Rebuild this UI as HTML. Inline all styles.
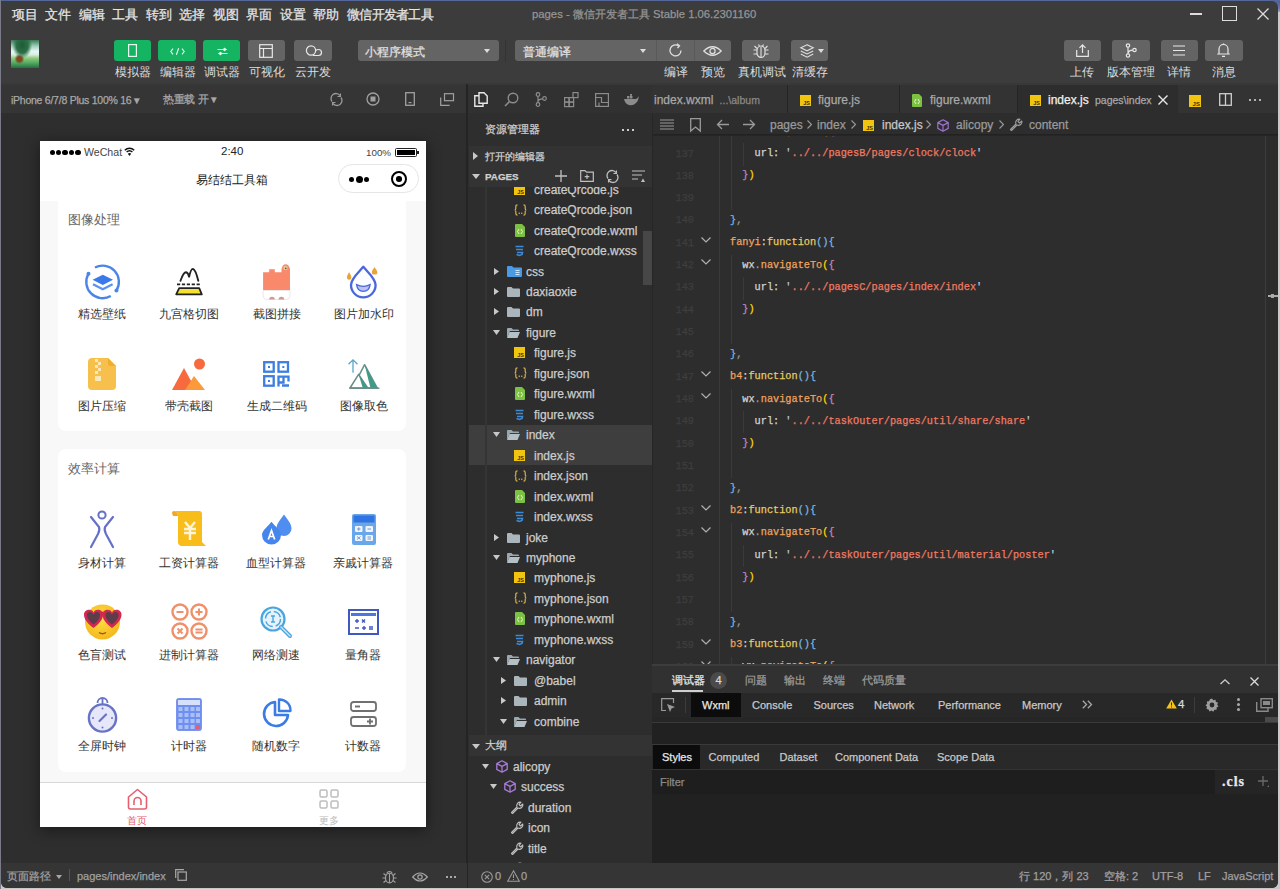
<!DOCTYPE html>
<html><head><meta charset="utf-8">
<style>
*{box-sizing:border-box;margin:0;padding:0}
html,body{width:1280px;height:889px;overflow:hidden;background:#c9c9c9;font-family:"Liberation Sans",sans-serif}
.a{position:absolute}
.t{position:absolute;white-space:nowrap;line-height:1;-webkit-text-stroke:0.25px currentColor}
#win{position:absolute;left:1px;top:0;width:1277px;height:888px;background:#3c3c3c;border-radius:0 6px 6px 6px;overflow:hidden}
.menu{top:8px;font-size:13px;color:#e6e6e6}
.btn{position:absolute;top:40px;height:21px;border-radius:3px;background:#646464}
.btn.g{background:#15b463}
.lbl{position:absolute;top:66px;font-size:12px;color:#dcdcdc;white-space:nowrap;line-height:1}
svg{position:absolute;overflow:visible}
.lb{font-size:12px;color:#333;-webkit-text-stroke:0}
.ph{-webkit-text-stroke:0 !important}
.ft{font-size:12px;color:#cccccc}
.dt{font-size:11px}
.sb{font-size:11px;color:#a0a0a0}
.tb{font-size:12px;color:#a8a8a8}
.bc{font-size:12px;color:#9a9a9a}
.ln{font-size:10.25px;font-family:"Liberation Mono",monospace;color:#3e3e3e;text-align:right}
.code{font-size:10.25px;font-family:"Liberation Mono",monospace;white-space:pre}
</style></head><body>
<div id="win"></div>
<div class="a" style="left:1272px;top:0;width:8px;height:12px;background:linear-gradient(200deg,#3f5aa8,#6a78a8 60%,#c9c9c9)"></div><div class="a" style="left:1271px;top:1px;width:7px;height:12px;background:#3c3c3c;border-radius:0 6px 0 0"></div><div class="a" style="left:0;top:0;width:1280px;height:1px;background:#55669a"></div>
<div class="a" style="left:0;top:0;width:1px;height:889px;background:#7a7a88"></div>
<!-- menu -->
<div class="t menu" style="left:12px">项目</div>
<div class="t menu" style="left:45px">文件</div>
<div class="t menu" style="left:79px">编辑</div>
<div class="t menu" style="left:112px">工具</div>
<div class="t menu" style="left:146px">转到</div>
<div class="t menu" style="left:179px">选择</div>
<div class="t menu" style="left:213px">视图</div>
<div class="t menu" style="left:246px">界面</div>
<div class="t menu" style="left:280px">设置</div>
<div class="t menu" style="left:313px">帮助</div>
<div class="t menu" style="left:347px;letter-spacing:-0.75px">微信开发者工具</div>
<div class="t" style="left:532px;top:8.5px;font-size:11.3px;color:#959595">pages - 微信开发者工具 Stable 1.06.2301160</div>
<div class="a" style="left:1190px;top:13px;width:12px;height:1.5px;background:#ddd"></div>
<div class="a" style="left:1222px;top:6px;width:15px;height:15px;border:1.5px solid #ddd"></div>
<svg style="left:1257px;top:8px" width="12" height="12"><path d="M0.5 0.5L11.5 11.5M11.5 0.5L0.5 11.5" stroke="#ddd" stroke-width="1.3"/></svg>
<!-- avatar -->
<div class="a" style="left:11px;top:40px;width:28px;height:28px;background:radial-gradient(circle at 30% 68%,#7a4a22 0,#7a4a22 2.5px,transparent 5px),radial-gradient(ellipse at 40% 18%,#1f5a35 0,#2d7048 6px,transparent 10px),linear-gradient(180deg,#3d7a55 0%,#9fd0bc 22%,#e6f6f8 40%,#d8f0e0 52%,#8cc878 66%,#52a862 82%,#23703f 100%)"></div>
<!-- toolbar buttons -->
<div class="btn g" style="left:114px;width:37px"></div>
<div class="btn g" style="left:158px;width:38px"></div>
<div class="btn g" style="left:203px;width:37px"></div>
<div class="btn" style="left:248px;width:37px"></div>
<div class="btn" style="left:294px;width:38px"></div>
<div class="lbl" style="left:115px">模拟器</div>
<div class="lbl" style="left:160px">编辑器</div>
<div class="lbl" style="left:204px">调试器</div>
<div class="lbl" style="left:249px">可视化</div>
<div class="lbl" style="left:295px">云开发</div>
<div class="btn" style="left:358px;width:141px"></div>
<div class="t" style="left:365px;top:46.5px;font-size:11.5px;color:#e0e0e0">小程序模式</div>
<svg style="left:484px;top:49px" width="6" height="4"><path d="M0 0H6L3 4Z" fill="#ddd"/></svg>
<div class="a" style="left:505px;top:40px;width:1px;height:22px;background:#333"></div>
<div class="btn" style="left:515px;width:216px"></div>
<div class="a" style="left:656px;top:40px;width:1px;height:21px;background:#5a5a5a"></div>
<div class="a" style="left:694px;top:40px;width:1px;height:21px;background:#5a5a5a"></div>
<div class="t" style="left:523px;top:46.5px;font-size:11.5px;color:#e0e0e0">普通编译</div>
<svg style="left:640px;top:49px" width="6" height="4"><path d="M0 0H6L3 4Z" fill="#ddd"/></svg>
<div class="btn" style="left:742px;width:38px"></div>
<div class="btn" style="left:791px;width:37px"></div>
<div class="lbl" style="left:664px">编译</div>
<div class="lbl" style="left:701px">预览</div>
<div class="lbl" style="left:738px">真机调试</div>
<div class="lbl" style="left:792px">清缓存</div>
<div class="btn" style="left:1064px;width:37px"></div>
<div class="btn" style="left:1112px;width:38px"></div>
<div class="btn" style="left:1161px;width:37px"></div>
<div class="btn" style="left:1205px;width:38px"></div>
<div class="lbl" style="left:1070px">上传</div>
<div class="lbl" style="left:1107px">版本管理</div>
<div class="lbl" style="left:1167px">详情</div>
<div class="lbl" style="left:1212px">消息</div>
<!-- toolbar icons -->
<svg style="left:128px;top:44px" width="9" height="13" viewBox="0 0 9 13"><rect x="0.6" y="0.6" width="7.8" height="11.8" fill="none" stroke="#e6fff0" stroke-width="1.2"/></svg>
<svg style="left:170px;top:47.5px" width="15" height="7" viewBox="0 0 15 7"><path d="M3 0.6L0.8 3.5L3 6.4M12 0.6L14.2 3.5L12 6.4M8.6 0.3L6.4 6.7" fill="none" stroke="#e6fff0" stroke-width="1.1"/></svg>
<svg style="left:217px;top:48px" width="11" height="7" viewBox="0 0 11 7"><path d="M0.5 1.5H7M7 0V3L9.5 1.5ZM10.5 5.5H4M4 4V7L1.5 5.5Z" fill="#e6fff0" stroke="#e6fff0" stroke-width="0.9"/></svg>
<svg style="left:259px;top:44px" width="14" height="14" viewBox="0 0 14 14"><rect x="0.7" y="0.7" width="12.6" height="12.6" fill="none" stroke="#e8e8e8" stroke-width="1.2"/><path d="M0.7 4.5H13.3M4.5 4.5V13.3" stroke="#e8e8e8" stroke-width="1.2"/></svg>
<svg style="left:305px;top:45px" width="17" height="12" viewBox="0 0 17 12"><circle cx="6" cy="5.5" r="4.6" fill="none" stroke="#e8e8e8" stroke-width="1.2"/><path d="M8 10.5H13.5A3 3 0 0 0 13.5 4.5Q12 4.5 10.5 5.5" fill="none" stroke="#e8e8e8" stroke-width="1.2"/></svg>
<svg style="left:668px;top:43px" width="15" height="15" viewBox="0 0 15 15"><path d="M13 7.5A5.5 5.5 0 1 1 10.5 2.8" fill="none" stroke="#e0e0e0" stroke-width="1.3"/><path d="M9 0.8L11.5 2.8L9.5 5" fill="none" stroke="#e0e0e0" stroke-width="1.3"/></svg>
<svg style="left:703px;top:46px" width="19" height="10" viewBox="0 0 19 10"><path d="M0.8 5Q9.5 -3.5 18.2 5Q9.5 13.5 0.8 5Z" fill="none" stroke="#e0e0e0" stroke-width="1.2"/><circle cx="9.5" cy="5" r="2.6" fill="none" stroke="#e0e0e0" stroke-width="1.2"/></svg>
<svg style="left:753px;top:43px" width="16" height="15" viewBox="0 0 16 15"><path d="M8 3A4 4.5 0 0 1 12 7.5V10A4 4.5 0 0 1 4 10V7.5A4 4.5 0 0 1 8 3Z" fill="none" stroke="#e0e0e0" stroke-width="1.2"/><path d="M5.5 1.5L6.5 3.3M10.5 1.5L9.5 3.3M8 4V14M0.5 7H4M12 7H15.5M0.5 11H4M12 11H15.5M1.5 3L4 5.5M14.5 3L12 5.5" stroke="#e0e0e0" stroke-width="1.1"/></svg>
<svg style="left:800px;top:44px" width="14" height="14" viewBox="0 0 14 14"><path d="M7 0.8L13.2 3.8L7 6.8L0.8 3.8Z" fill="none" stroke="#e0e0e0" stroke-width="1.1"/><path d="M0.8 7L7 10L13.2 7M0.8 10L7 13.2L13.2 10" fill="none" stroke="#e0e0e0" stroke-width="1.1"/></svg>
<svg style="left:818px;top:49px" width="6" height="4"><path d="M0 0H6L3 4Z" fill="#ddd"/></svg>
<svg style="left:1076px;top:44px" width="13" height="13" viewBox="0 0 13 13"><path d="M0.7 6V12.3H12.3V6" fill="none" stroke="#e8e8e8" stroke-width="1.2"/><path d="M6.5 9V1M3.5 3.8L6.5 0.8L9.5 3.8" fill="none" stroke="#e8e8e8" stroke-width="1.2"/></svg>
<svg style="left:1125px;top:43px" width="12" height="15" viewBox="0 0 12 15"><circle cx="3" cy="2.5" r="1.7" fill="none" stroke="#e8e8e8" stroke-width="1.2"/><circle cx="3" cy="12.5" r="1.7" fill="none" stroke="#e8e8e8" stroke-width="1.2"/><circle cx="9.5" cy="7" r="1.7" fill="none" stroke="#e8e8e8" stroke-width="1.2"/><path d="M3 4.2V10.8M3 10.5Q3.5 7.5 7.8 7.2" fill="none" stroke="#e8e8e8" stroke-width="1.2"/></svg>
<svg style="left:1173px;top:45px" width="12" height="11" viewBox="0 0 12 11"><path d="M0 1H12M0 5.5H12M0 10H12" stroke="#e8e8e8" stroke-width="1.2"/></svg>
<svg style="left:1217px;top:43px" width="13" height="15" viewBox="0 0 13 15"><path d="M2 11V6A4.5 4.5 0 0 1 11 6V11H12.3H0.7Z" fill="none" stroke="#e8e8e8" stroke-width="1.2" stroke-linejoin="round"/><path d="M6.5 0.5V1.5M5 13.3H8" stroke="#e8e8e8" stroke-width="1.3"/></svg>
<!-- toolbar bottom -->
<div class="a" style="left:1px;top:83px;width:1277px;height:2px;background:#383838"></div>
<!-- simulator panel -->
<div class="a" style="left:1px;top:85px;width:465px;height:28px;background:#353535"></div>
<div class="a" style="left:1px;top:113px;width:465px;height:750px;background:#2e2e2e"></div>
<div class="a" style="left:466px;top:84px;width:2px;height:779px;background:#242424"></div>
<div class="t" style="left:11px;top:94.5px;font-size:10.5px;letter-spacing:-0.25px;color:#a8a8a8">iPhone 6/7/8 Plus 100% 16 ▾</div>
<div class="t" style="left:163px;top:94px;font-size:11px;letter-spacing:-0.3px;color:#a8a8a8">热重载 开 ▾</div>
<svg style="left:330px;top:93px" width="13" height="13" viewBox="0 0 13 13"><path d="M2 8.5A5 5 0 0 1 10 2.5M11 4.5A5 5 0 0 1 3 10.5" fill="none" stroke="#9a9a9a" stroke-width="1.3"/><path d="M10.5 0.5v3h-3M2.5 12.5v-3h3" fill="none" stroke="#9a9a9a" stroke-width="1.1"/></svg>
<svg style="left:366px;top:92px" width="14" height="14"><circle cx="7" cy="7" r="6" fill="none" stroke="#a0a0a0" stroke-width="1.3"/><rect x="4.5" y="4.5" width="5" height="5" fill="#a0a0a0"/></svg>
<svg style="left:405px;top:92px" width="10" height="14"><rect x="0.7" y="0.7" width="8.6" height="12.6" fill="none" stroke="#a0a0a0" stroke-width="1.3"/><rect x="3.5" y="10" width="3" height="1.2" fill="#a0a0a0"/></svg>
<svg style="left:440px;top:93px" width="14" height="13"><rect x="4.5" y="0.7" width="9" height="7" fill="none" stroke="#a0a0a0" stroke-width="1.2"/><path d="M0.7 4.5v7.8h9" fill="none" stroke="#a0a0a0" stroke-width="1.2"/></svg>
<!-- phone -->
<div class="a" style="left:40px;top:141px;width:386px;height:686px;background:#fff;box-shadow:0 3px 14px rgba(0,0,0,.45)"></div>
<div class="a" style="left:40px;top:201px;width:386px;height:581px;background:#f8f8f8"></div>
<div class="a" style="left:58px;top:201px;width:348px;height:230px;background:#fff;border-radius:0 0 8px 8px"></div>
<div class="a" style="left:58px;top:449px;width:348px;height:323px;background:#fff;border-radius:8px"></div>
<div class="a" style="left:40px;top:782px;width:386px;height:45px;background:#fff;border-top:1px solid #d8d8d8"></div>
<div class="a" style="left:49.5px;top:149.5px;width:5.5px;height:5.5px;border-radius:50%;background:#000"></div><div class="a" style="left:55.9px;top:149.5px;width:5.5px;height:5.5px;border-radius:50%;background:#000"></div><div class="a" style="left:62.3px;top:149.5px;width:5.5px;height:5.5px;border-radius:50%;background:#000"></div><div class="a" style="left:68.7px;top:149.5px;width:5.5px;height:5.5px;border-radius:50%;background:#000"></div><div class="a" style="left:75.1px;top:149.5px;width:5.5px;height:5.5px;border-radius:50%;background:#000"></div>
<div class="t ph" style="left:84px;top:146.5px;font-size:10.6px;color:#444">WeChat</div>
<svg style="left:123.5px;top:147px" width="11" height="9" viewBox="0 0 11 9"><path d="M0.8 3.2A6.8 6.8 0 0 1 10.2 3.2" fill="none" stroke="#111" stroke-width="1.5"/><path d="M2.6 5A4.3 4.3 0 0 1 8.4 5" fill="none" stroke="#111" stroke-width="1.5"/><path d="M5.5 9L3.8 6.8A2.4 2.4 0 0 1 7.2 6.8Z" fill="#111"/></svg>
<div class="t ph" style="left:221px;top:146px;font-size:11.5px;color:#222">2:40</div>
<div class="t ph" style="left:366px;top:147.5px;font-size:9.8px;color:#444">100%</div>
<div class="a" style="left:395px;top:148px;width:22px;height:9px;border:1px solid #222;border-radius:1.5px;padding:1px"><div style="width:100%;height:100%;background:#000"></div></div>
<div class="a" style="left:417px;top:151px;width:2px;height:3px;background:#222"></div>
<div class="t ph" style="left:196px;top:174.5px;font-size:11.9px;color:#222">易结结工具箱</div>
<div class="a" style="left:338px;top:164px;width:81px;height:29px;border:1px solid #e5e5e5;border-radius:15px;background:rgba(255,255,255,.6)"></div>
<div class="a" style="left:349px;top:177px;width:5px;height:5px;border-radius:50%;background:#000"></div>
<div class="a" style="left:355.5px;top:175.5px;width:7px;height:7px;border-radius:50%;background:#000"></div>
<div class="a" style="left:364px;top:177px;width:5px;height:5px;border-radius:50%;background:#000"></div>
<div class="a" style="left:391px;top:171px;width:16px;height:16px;border-radius:50%;border:2px solid #000"></div>
<div class="a" style="left:396px;top:176px;width:5.5px;height:5.5px;border-radius:50%;background:#000"></div>
<div class="t ph" style="left:68px;top:214px;font-size:12.5px;color:#666">图像处理</div>
<div class="t ph" style="left:68px;top:463px;font-size:12.5px;color:#666">效率计算</div>
<!-- icon grid card 1 -->
<svg style="left:84px;top:264px" width="36" height="36" viewBox="0 0 36 36"><path d="M10.95 3.51A16.3 16.3 0 0 1 32.42 26.54" fill="none" stroke="#4a86e8" stroke-width="2.4"/><path d="M26.75 32.02A16.3 16.3 0 0 1 4.48 9.75" fill="none" stroke="#4a86e8" stroke-width="2.4"/><circle cx="32.42" cy="26.54" r="2" fill="#4a86e8"/><circle cx="4.48" cy="9.75" r="2" fill="#4a86e8"/><path d="M18.8 10.7L29 15.8L18.8 20.9L8.6 15.8Z" fill="#3a7ae8"/><path d="M9 20.2L18.8 25.2L28.6 20.2" fill="none" stroke="#5b93ee" stroke-width="2.4"/></svg>
<svg style="left:175px;top:268px" width="28" height="28" viewBox="0 0 28 28"><path d="M5.5 12.8Q8.5 4 11.1 4.2Q13 4.5 14.1 8.7Q16 0.6 17.9 0.9Q20.5 1.5 23.3 12.8" fill="none" stroke="#222" stroke-width="1.9" stroke-linejoin="round" stroke-linecap="round"/><path d="M2 16.4H26.3" stroke="#222" stroke-width="1.9" stroke-dasharray="3.2 1.7"/><path d="M4.2 20.2H24.2L26.8 26.3H1.2Z" fill="#f4e134" stroke="#222" stroke-width="1.8" stroke-linejoin="round"/></svg>
<svg style="left:262px;top:264px" width="29" height="36" viewBox="0 0 29 36"><path d="M1.1 8.2H7.2V5.2H12.8V8.2H19.5V5Q20.5 0.5 23.5 0.3Q27 0.5 28 5V26.5H1.1Z" fill="#f8896b"/><path d="M1.1 26.5H28V31.5A4 4 0 0 1 24 35.5H5A4 4 0 0 1 1.1 31.5Z" fill="#fff" stroke="#f1e6e6" stroke-width="1"/><path d="M7.2 35.5A2.8 2.8 0 0 1 12.8 35.5ZM16.6 35.5A2.8 2.8 0 0 1 22.2 35.5Z" fill="#d09a90"/><circle cx="23.5" cy="4" r="2.2" fill="#e8c89a"/><circle cx="23.8" cy="4.4" r="0.8" fill="#6a4a3a"/></svg>
<svg style="left:346px;top:265px" width="32" height="34" viewBox="0 0 32 34"><path d="M17.3 1.8C13 7 5 13.5 5 20A12.3 12.3 0 0 0 29.6 20C29.6 13.5 21.6 7 17.3 1.8Z" fill="#fafcff" stroke="#4a66dc" stroke-width="2.3" stroke-linejoin="round"/><path d="M10.6 19.6Q17.3 23 24.1 19.6Q23.2 26.3 17.3 26.4Q11.5 26.3 10.6 19.6Z" fill="#b9c2f5" stroke="#4a66dc" stroke-width="1.3"/><path d="M3.1 7.2C2 9 0.9 10.8 0.9 12.6A2.25 2.25 0 0 0 5.4 12.6C5.4 10.8 4.2 9 3.1 7.2Z" fill="#e8a33a"/><path d="M28.5 2.1C27.3 4 25.8 5.8 25.8 7.4A2.75 2.2 0 0 0 31.3 7.4C31.3 5.8 29.7 4 28.5 2.1Z" fill="#e8a33a"/></svg>
<svg style="left:88px;top:358px" width="28" height="32" viewBox="0 0 28 32"><path d="M4 0H20L28 8V28A4 4 0 0 1 24 32H4A4 4 0 0 1 0 28V4A4 4 0 0 1 4 0Z" fill="#f7c04d"/><path d="M20 0L28 8H22A2 2 0 0 1 20 6Z" fill="#f2ad2f"/><path d="M7 1h3v3h-3zM10 4h3v3h-3zM7 7h3v3h-3zM10 10h3v3h-3zM7 13h3v3h-3zM7 18h6v5h-6z" fill="#fde7b4"/></svg>
<svg style="left:172px;top:358px" width="34" height="32" viewBox="0 0 34 32"><circle cx="27.5" cy="6" r="5.5" fill="#f76a3d"/><path d="M0 32L12 10L24 32Z" fill="#f76a3d"/><path d="M13 32L22 18L33 32Z" fill="#fb9a3a"/></svg>
<svg style="left:263px;top:361px" width="27" height="26" viewBox="0 0 27 26"><g fill="none" stroke="#3d7fe0" stroke-width="2.3"><rect x="1.2" y="1.2" width="9.5" height="9.5"/><rect x="15.5" y="1.2" width="9.5" height="9.5"/><rect x="1.2" y="15.2" width="9.5" height="9.5"/><path d="M15.5 14.5V25.5M15.5 15.6H25.5V20.5M20.5 15.6V21.5H15.5M19 24.5H26"/></g><rect x="5" y="5" width="2" height="2" fill="#3d7fe0"/><rect x="19.3" y="5" width="2" height="2" fill="#3d7fe0"/><rect x="5" y="19" width="2" height="2" fill="#3d7fe0"/></svg>
<svg style="left:347px;top:359px" width="34" height="31" viewBox="0 0 34 31"><path d="M6 13.8V1.2M1.5 5.2L6 0.8L10.5 5.2" fill="none" stroke="#5aa6cc" stroke-width="1.3"/><path d="M17.6 5.7L30.3 29H5.5Z" fill="none" stroke="#6b8c89" stroke-width="1.5" stroke-linejoin="round"/><path d="M17.6 5.7L30.3 29H23.5Z" fill="#3f9a88"/><path d="M11.6 15.3L20.7 29H3Z" fill="#fff" stroke="#6b8c89" stroke-width="1.5" stroke-linejoin="round"/><path d="M11.6 15.3L20.7 29H15.8Z" fill="#3f9a88"/><path d="M2.4 29.2H32.4" stroke="#6b8c89" stroke-width="1.5"/></svg>
<!-- labels card 1 -->
<div class="t lb" style="left:78px;top:308px">精选壁纸</div>
<div class="t lb" style="left:159px;top:308px">九宫格切图</div>
<div class="t lb" style="left:253px;top:308px">截图拼接</div>
<div class="t lb" style="left:334px;top:308px">图片加水印</div>
<div class="t lb" style="left:78px;top:400px">图片压缩</div>
<div class="t lb" style="left:165px;top:400px">带壳截图</div>
<div class="t lb" style="left:247px;top:400px">生成二维码</div>
<div class="t lb" style="left:340px;top:400px">图像取色</div>
<!-- card 2 icons -->
<svg style="left:89px;top:510px" width="26" height="38" viewBox="0 0 26 38"><circle cx="13" cy="5" r="3.6" fill="none" stroke="#6570c8" stroke-width="2"/><path d="M2 7L10 17Q11 20 9 24L2 37M24 7L16 17Q15 20 17 24L24 37" fill="none" stroke="#6570c8" stroke-width="2.2" stroke-linecap="round"/></svg>
<svg style="left:171px;top:510px" width="36" height="38" viewBox="0 0 36 38"><path d="M3 1H28A3 3 0 0 1 31 4V32L35 36H10A4 4 0 0 1 7 33V6Q7 2 3 1Z" fill="#f9bd1b"/><path d="M1 3Q1 1 3 1Q7 2 7 6H2Z" fill="#f5a623"/><path d="M14 12L19 18L24 12M13 19H25M13 23H25M19 18V30" fill="none" stroke="#fff5d6" stroke-width="2.4"/></svg>
<svg style="left:262px;top:514px" width="31" height="31" viewBox="0 0 31 31"><path d="M22 0.5C19.5 4.5 14.5 9 14.5 14.5A7.5 7.5 0 0 0 29.5 14.5C29.5 9 24.5 4.5 22 0.5Z" fill="#4f8ef0"/><path d="M9.5 7.7C6.5 12 0 16 0 21A9.5 9.5 0 0 0 19 21C19 16 12.5 12 9.5 7.7Z" fill="#4585ee"/><path d="M6.3 25.5L9.5 16.5L12.7 25.5M7.4 22.5H11.6" fill="none" stroke="#fff" stroke-width="1.7"/></svg>
<svg style="left:352px;top:514px" width="24" height="31" viewBox="0 0 24 31"><rect x="0" y="0" width="24" height="31" rx="2" fill="#6aa7ea"/><rect x="1.5" y="1.5" width="21" height="7" fill="#2f74e0"/><g fill="#f0f4fb"><rect x="3" y="12" width="7.5" height="6" rx="1"/><rect x="13.5" y="12" width="7.5" height="6" rx="1"/><rect x="3" y="21" width="7.5" height="6" rx="1"/><rect x="13.5" y="21" width="7.5" height="6" rx="1"/></g><path d="M5 15H8.5M6.75 13.3V16.7M15.5 15H19M15.5 23H19M15.5 25H19M5 22.5L8.5 25.5M8.5 22.5L5 25.5" stroke="#6a8fc4" stroke-width="0.9"/></svg>
<svg style="left:84px;top:602px" width="38" height="38" viewBox="0 0 38 38"><defs><radialGradient id="fg" cx="45%" cy="40%" r="60%"><stop offset="0" stop-color="#fde047"/><stop offset="1" stop-color="#f5b81c"/></radialGradient></defs><circle cx="18.5" cy="20" r="17.5" fill="url(#fg)"/><path d="M9.5 26C3 21 0 17 0 12.5C0 9.5 2.5 7.7 5 7.7C7.5 7.7 9 9 9.5 10.5C10 9 11.5 7.7 14 7.7C16.5 7.7 19 9.5 19 12.5C19 17 16 21 9.5 26Z" fill="#d0284e"/><path d="M28.0 26C21.5 21 18.5 17 18.5 12.5C18.5 9.5 21.0 7.7 23.5 7.7C26.0 7.7 27.5 9 28.0 10.5C28.5 9 30.0 7.7 32.5 7.7C35.0 7.7 37.5 9.5 37.5 12.5C37.5 17 34.5 21 28.0 26Z" fill="#d0284e"/><path d="M9.5 22.5C5 19 3 16 3 13C3 11 4.5 10 6 10C7.8 10 9 11.5 9.5 13C10 11.5 11.2 10 13 10C14.5 10 16 11 16 13C16 16 14 19 9.5 22.5Z" fill="#5b3d4c"/><path d="M28.0 22.5C23.5 19 21.5 16 21.5 13C21.5 11 23.0 10 24.5 10C26.3 10 27.5 11.5 28.0 13C28.5 11.5 29.7 10 31.5 10C33.0 10 34.5 11 34.5 13C34.5 16 32.5 19 28.0 22.5Z" fill="#5b3d4c"/><path d="M17 11H21" stroke="#d0284e" stroke-width="2.5"/><path d="M15 30.5Q18.5 33 22 30.5" fill="none" stroke="#a5502a" stroke-width="1.4"/></svg>
<svg style="left:171px;top:603px" width="37" height="37" viewBox="0 0 37 37"><g fill="none" stroke="#f0906a" stroke-width="2.4"><circle cx="9" cy="9" r="7.5"/><circle cx="28" cy="9" r="7.5"/><circle cx="9" cy="28" r="7.5"/><circle cx="28" cy="28" r="7.5"/></g><path d="M5.5 9H12.5M24.5 9H31.5M28 5.5V12.5M6.5 25.5L11.5 30.5M11.5 25.5L6.5 30.5M24.5 26.5H31.5M24.5 29.5H31.5" stroke="#f0906a" stroke-width="2"/></svg>
<svg style="left:260px;top:606px" width="33" height="32" viewBox="0 0 33 32"><circle cx="13" cy="13" r="11.5" fill="#e6f3fc" stroke="#4aa5de" stroke-width="2.2"/><circle cx="13" cy="13" r="7.5" fill="none" stroke="#4aa5de" stroke-width="1.4" stroke-dasharray="9 3"/><path d="M11 10H15M13 10V16M11 16H15" stroke="#4aa5de" stroke-width="1.4"/><path d="M21 21L30 30" stroke="#4aa5de" stroke-width="4" stroke-linecap="round"/><path d="M21 21L30 30" stroke="#cfe9f9" stroke-width="1.4" stroke-linecap="round"/></svg>
<svg style="left:348px;top:609px" width="31" height="26" viewBox="0 0 31 26"><rect x="1" y="1" width="29" height="24" fill="#fff" stroke="#4059c0" stroke-width="2"/><rect x="3" y="4" width="25" height="3" fill="#4d74e0"/><path d="M7 12H11M9 10V14M14 10.5L17 13.5M17 10.5L14 13.5M7 19H11M14 19H18M16 17V21M21 18H25M21 20H25" stroke="#4059c0" stroke-width="1.4"/></svg>
<svg style="left:87px;top:695px" width="31" height="38" viewBox="0 0 31 38"><path d="M10.5 8A5 5 0 0 1 20.5 8" fill="none" stroke="#6873c6" stroke-width="1.8"/><path d="M15.5 4V9" stroke="#6873c6" stroke-width="1.8"/><circle cx="15.5" cy="23" r="13.6" fill="#e6e8fa" stroke="#6873c6" stroke-width="2.4"/><path d="M12.5 26L19 19.5" stroke="#6873c6" stroke-width="2.2" stroke-linecap="round"/><g fill="#6873c6"><circle cx="15.5" cy="13.5" r="1"/><circle cx="15.5" cy="32.5" r="1"/><circle cx="6" cy="23" r="1"/><circle cx="25" cy="23" r="1"/></g></svg>
<svg style="left:176px;top:698px" width="26" height="33" viewBox="0 0 26 33"><rect x="0.5" y="0.5" width="25" height="32" rx="2" fill="#6e8ff0" stroke="#7b95ee"/><rect x="2" y="2" width="22" height="5" fill="#d6e0fb"/><g fill="#a9bff8"><rect x="2.5" y="9" width="4" height="4"/><rect x="8.5" y="9" width="4" height="4"/><rect x="14.5" y="9" width="4" height="4"/><rect x="20" y="9" width="4" height="4"/><rect x="2.5" y="15" width="4" height="4"/><rect x="8.5" y="15" width="4" height="4"/><rect x="14.5" y="15" width="4" height="4"/><rect x="20" y="15" width="4" height="4"/><rect x="2.5" y="21" width="4" height="4"/><rect x="8.5" y="21" width="4" height="4"/><rect x="14.5" y="21" width="4" height="4"/><rect x="20" y="21" width="4" height="4"/><rect x="2.5" y="27" width="4" height="4"/><rect x="8.5" y="27" width="4" height="4"/><rect x="14.5" y="27" width="4" height="4"/></g><rect x="20" y="27" width="4" height="4" fill="#e0607a"/></svg>
<svg style="left:262px;top:698px" width="30" height="30" viewBox="0 0 30 30"><path d="M13 4A12 12 0 1 0 26 17H13Z" fill="none" stroke="#3b7be6" stroke-width="2.6" stroke-linejoin="round"/><path d="M17 1.5A11 11 0 0 1 28.5 13H17Z" fill="none" stroke="#3b7be6" stroke-width="2.4" stroke-linejoin="round"/></svg>
<svg style="left:350px;top:701px" width="27" height="26" viewBox="0 0 27 26"><rect x="1" y="1" width="25" height="9" rx="2.5" fill="none" stroke="#707070" stroke-width="1.8"/><rect x="1" y="16" width="25" height="9" rx="2.5" fill="none" stroke="#707070" stroke-width="1.8"/><path d="M5 5.5H10M17 20.5H23M20 17.5V23.5" stroke="#707070" stroke-width="1.8"/></svg>
<!-- labels card 2 -->
<div class="t lb" style="left:78px;top:557px">身材计算</div>
<div class="t lb" style="left:159px;top:557px">工资计算器</div>
<div class="t lb" style="left:246px;top:557px">血型计算器</div>
<div class="t lb" style="left:333px;top:557px">亲戚计算器</div>
<div class="t lb" style="left:78px;top:649px">色盲测试</div>
<div class="t lb" style="left:159px;top:649px">进制计算器</div>
<div class="t lb" style="left:252px;top:649px">网络测速</div>
<div class="t lb" style="left:345px;top:649px">量角器</div>
<div class="t lb" style="left:78px;top:740px">全屏时钟</div>
<div class="t lb" style="left:171px;top:740px">计时器</div>
<div class="t lb" style="left:252px;top:740px">随机数字</div>
<div class="t lb" style="left:345px;top:740px">计数器</div>
<!-- tabbar -->
<svg style="left:127px;top:788px" width="21" height="22" viewBox="0 0 21 22"><path d="M1.5 9L10.5 1.5L19.5 9V19A2 2 0 0 1 17.5 21H3.5A2 2 0 0 1 1.5 19Z" fill="none" stroke="#e4606f" stroke-width="1.6" stroke-linejoin="round"/><path d="M7 17V13A3.5 3.5 0 0 1 14 13V17" fill="none" stroke="#e4606f" stroke-width="1.6"/></svg>
<div class="t ph" style="left:127px;top:816px;font-size:10px;color:#e4606f;height:10px;overflow:hidden">首页</div>
<svg style="left:319px;top:789px" width="20" height="20" viewBox="0 0 20 20"><g fill="none" stroke="#bdbdbd" stroke-width="1.5"><rect x="1" y="1" width="7" height="7" rx="1.5"/><rect x="12" y="1" width="7" height="7" rx="1.5"/><rect x="1" y="12" width="7" height="7" rx="1.5"/><rect x="12" y="12" width="7" height="7" rx="1.5"/></g></svg>
<div class="t ph" style="left:319px;top:816px;font-size:10px;color:#bbb;height:10px;overflow:hidden">更多</div>
<!-- explorer -->
<div class="a" style="left:468px;top:85px;width:184px;height:778px;background:#2d2d2d"></div>
<div class="a" style="left:468px;top:85px;width:184px;height:28px;background:#313131"></div>
<div class="a" style="left:468px;top:113px;width:184px;height:33px;background:#2e2e2e"></div>
<div class="a" style="left:469px;top:146px;width:183px;height:41px;background:#333333"></div>
<div class="a" style="left:469px;top:424.52px;width:183px;height:40.92px;background:#3e3e3e"></div>
<div class="a" style="left:485px;top:187px;width:2px;height:548px;background:#353535"></div>
<svg style="left:514px;top:183.73px" width="11" height="11" viewBox="0 0 11 11"><rect width="11" height="11" fill="#f1c40f"/><text x="10" y="10" font-size="5.5" font-family="Liberation Sans" font-weight="bold" fill="#3a3000" text-anchor="end">JS</text></svg>
<div class="t ft" style="left:534px;top:183.73px">createQrcode.js</div>
<svg style="left:514.0px;top:203.69px" width="13" height="12" viewBox="0 0 13 12"><path d="M3.5 0.8Q1.8 0.8 1.8 2.5V4.5Q1.8 6 0.6 6Q1.8 6 1.8 7.5V9.5Q1.8 11.2 3.5 11.2M9.5 0.8Q11.2 0.8 11.2 2.5V4.5Q11.2 6 12.4 6Q11.2 6 11.2 7.5V9.5Q11.2 11.2 9.5 11.2" fill="none" stroke="#d9b24c" stroke-width="1.2"/><rect x="4.6" y="8.6" width="1.3" height="1.3" fill="#d9b24c"/><rect x="7.1" y="8.6" width="1.3" height="1.3" fill="#d9b24c"/></svg>
<div class="t ft" style="left:534px;top:204.19px">createQrcode.json</div>
<svg style="left:515px;top:223.65px" width="10" height="13" viewBox="0 0 10 13"><path d="M0 1A1 1 0 0 1 1 0H7L10 3V12A1 1 0 0 1 9 13H1A1 1 0 0 1 0 12Z" fill="#7cc142"/><path d="M4 5L2.5 7.5L4 10M6 5L7.5 7.5L6 10" fill="none" stroke="#e6f5d5" stroke-width="1"/></svg>
<div class="t ft" style="left:534px;top:224.65px">createQrcode.wxml</div>
<svg style="left:514px;top:245.11px" width="11" height="11" viewBox="0 0 11 11"><path d="M1 1H10L9 10L5.5 11L2 10Z" fill="none"/><path d="M1.5 1.5H9.5M2 4.5H9M3 7.5H8.5L8 9.5L5.5 10.5L2.5 9.5" fill="none" stroke="#3c8ad8" stroke-width="1.6"/></svg>
<div class="t ft" style="left:534px;top:245.11px">createQrcode.wxss</div>
<svg style="left:494px;top:267.57px" width="5" height="7"><path d="M0 0V7L5 3.5Z" fill="#c8c8c8"/></svg>
<svg style="left:507px;top:266.07px" width="15" height="11" viewBox="0 0 15 11"><path d="M0 1A1 1 0 0 1 1 0H5L6.5 1.5H14A1 1 0 0 1 15 2.5V10A1 1 0 0 1 14 11H1A1 1 0 0 1 0 10Z" fill="#4a9ae6"/><path d="M8.5 4.5H12.5M8.5 6.5H12.5M8.5 8.5H12.5" stroke="#cfe6fb" stroke-width="1"/></svg>
<div class="t ft" style="left:526px;top:265.57px">css</div>
<svg style="left:494px;top:288.03px" width="5" height="7"><path d="M0 0V7L5 3.5Z" fill="#c8c8c8"/></svg>
<svg style="left:507px;top:287.03px" width="13" height="10" viewBox="0 0 13 10"><path d="M0 1A1 1 0 0 1 1 0H4.5L6 1.5H12A1 1 0 0 1 13 2.5V9A1 1 0 0 1 12 10H1A1 1 0 0 1 0 9Z" fill="#aab6bc"/></svg>
<div class="t ft" style="left:526px;top:286.03px">daxiaoxie</div>
<svg style="left:494px;top:308.49px" width="5" height="7"><path d="M0 0V7L5 3.5Z" fill="#c8c8c8"/></svg>
<svg style="left:507px;top:307.49px" width="13" height="10" viewBox="0 0 13 10"><path d="M0 1A1 1 0 0 1 1 0H4.5L6 1.5H12A1 1 0 0 1 13 2.5V9A1 1 0 0 1 12 10H1A1 1 0 0 1 0 9Z" fill="#aab6bc"/></svg>
<div class="t ft" style="left:526px;top:306.49px">dm</div>
<svg style="left:492.5px;top:329.95px" width="7" height="5"><path d="M0 0H7L3.5 5Z" fill="#c8c8c8"/></svg>
<svg style="left:507px;top:327.95px" width="13" height="10" viewBox="0 0 13 10"><path d="M0 1A1 1 0 0 1 1 0H4.5L6 1.5H11A1 1 0 0 1 12 2.5V3H3L0 10Z" fill="#9aa8b0"/><path d="M2.5 4H13L10.5 10H0Z" fill="#b4c0c6"/></svg>
<div class="t ft" style="left:526px;top:326.95px">figure</div>
<svg style="left:514px;top:347.41px" width="11" height="11" viewBox="0 0 11 11"><rect width="11" height="11" fill="#f1c40f"/><text x="10" y="10" font-size="5.5" font-family="Liberation Sans" font-weight="bold" fill="#3a3000" text-anchor="end">JS</text></svg>
<div class="t ft" style="left:534px;top:347.41px">figure.js</div>
<svg style="left:514.0px;top:367.37px" width="13" height="12" viewBox="0 0 13 12"><path d="M3.5 0.8Q1.8 0.8 1.8 2.5V4.5Q1.8 6 0.6 6Q1.8 6 1.8 7.5V9.5Q1.8 11.2 3.5 11.2M9.5 0.8Q11.2 0.8 11.2 2.5V4.5Q11.2 6 12.4 6Q11.2 6 11.2 7.5V9.5Q11.2 11.2 9.5 11.2" fill="none" stroke="#d9b24c" stroke-width="1.2"/><rect x="4.6" y="8.6" width="1.3" height="1.3" fill="#d9b24c"/><rect x="7.1" y="8.6" width="1.3" height="1.3" fill="#d9b24c"/></svg>
<div class="t ft" style="left:534px;top:367.87px">figure.json</div>
<svg style="left:515px;top:387.33px" width="10" height="13" viewBox="0 0 10 13"><path d="M0 1A1 1 0 0 1 1 0H7L10 3V12A1 1 0 0 1 9 13H1A1 1 0 0 1 0 12Z" fill="#7cc142"/><path d="M4 5L2.5 7.5L4 10M6 5L7.5 7.5L6 10" fill="none" stroke="#e6f5d5" stroke-width="1"/></svg>
<div class="t ft" style="left:534px;top:388.33px">figure.wxml</div>
<svg style="left:514px;top:408.79px" width="11" height="11" viewBox="0 0 11 11"><path d="M1 1H10L9 10L5.5 11L2 10Z" fill="none"/><path d="M1.5 1.5H9.5M2 4.5H9M3 7.5H8.5L8 9.5L5.5 10.5L2.5 9.5" fill="none" stroke="#3c8ad8" stroke-width="1.6"/></svg>
<div class="t ft" style="left:534px;top:408.79px">figure.wxss</div>
<svg style="left:492.5px;top:432.25px" width="7" height="5"><path d="M0 0H7L3.5 5Z" fill="#c8c8c8"/></svg>
<svg style="left:507px;top:430.25px" width="13" height="10" viewBox="0 0 13 10"><path d="M0 1A1 1 0 0 1 1 0H4.5L6 1.5H11A1 1 0 0 1 12 2.5V3H3L0 10Z" fill="#9aa8b0"/><path d="M2.5 4H13L10.5 10H0Z" fill="#b4c0c6"/></svg>
<div class="t ft" style="left:526px;top:429.25px">index</div>
<svg style="left:514px;top:449.71px" width="11" height="11" viewBox="0 0 11 11"><rect width="11" height="11" fill="#f1c40f"/><text x="10" y="10" font-size="5.5" font-family="Liberation Sans" font-weight="bold" fill="#3a3000" text-anchor="end">JS</text></svg>
<div class="t ft" style="left:534px;top:449.71px">index.js</div>
<svg style="left:514.0px;top:469.67px" width="13" height="12" viewBox="0 0 13 12"><path d="M3.5 0.8Q1.8 0.8 1.8 2.5V4.5Q1.8 6 0.6 6Q1.8 6 1.8 7.5V9.5Q1.8 11.2 3.5 11.2M9.5 0.8Q11.2 0.8 11.2 2.5V4.5Q11.2 6 12.4 6Q11.2 6 11.2 7.5V9.5Q11.2 11.2 9.5 11.2" fill="none" stroke="#d9b24c" stroke-width="1.2"/><rect x="4.6" y="8.6" width="1.3" height="1.3" fill="#d9b24c"/><rect x="7.1" y="8.6" width="1.3" height="1.3" fill="#d9b24c"/></svg>
<div class="t ft" style="left:534px;top:470.17px">index.json</div>
<svg style="left:515px;top:489.63px" width="10" height="13" viewBox="0 0 10 13"><path d="M0 1A1 1 0 0 1 1 0H7L10 3V12A1 1 0 0 1 9 13H1A1 1 0 0 1 0 12Z" fill="#7cc142"/><path d="M4 5L2.5 7.5L4 10M6 5L7.5 7.5L6 10" fill="none" stroke="#e6f5d5" stroke-width="1"/></svg>
<div class="t ft" style="left:534px;top:490.63px">index.wxml</div>
<svg style="left:514px;top:511.09px" width="11" height="11" viewBox="0 0 11 11"><path d="M1 1H10L9 10L5.5 11L2 10Z" fill="none"/><path d="M1.5 1.5H9.5M2 4.5H9M3 7.5H8.5L8 9.5L5.5 10.5L2.5 9.5" fill="none" stroke="#3c8ad8" stroke-width="1.6"/></svg>
<div class="t ft" style="left:534px;top:511.09px">index.wxss</div>
<svg style="left:494px;top:533.55px" width="5" height="7"><path d="M0 0V7L5 3.5Z" fill="#c8c8c8"/></svg>
<svg style="left:507px;top:532.55px" width="13" height="10" viewBox="0 0 13 10"><path d="M0 1A1 1 0 0 1 1 0H4.5L6 1.5H12A1 1 0 0 1 13 2.5V9A1 1 0 0 1 12 10H1A1 1 0 0 1 0 9Z" fill="#aab6bc"/></svg>
<div class="t ft" style="left:526px;top:531.55px">joke</div>
<svg style="left:492.5px;top:555.01px" width="7" height="5"><path d="M0 0H7L3.5 5Z" fill="#c8c8c8"/></svg>
<svg style="left:507px;top:553.01px" width="13" height="10" viewBox="0 0 13 10"><path d="M0 1A1 1 0 0 1 1 0H4.5L6 1.5H11A1 1 0 0 1 12 2.5V3H3L0 10Z" fill="#9aa8b0"/><path d="M2.5 4H13L10.5 10H0Z" fill="#b4c0c6"/></svg>
<div class="t ft" style="left:526px;top:552.01px">myphone</div>
<svg style="left:514px;top:572.47px" width="11" height="11" viewBox="0 0 11 11"><rect width="11" height="11" fill="#f1c40f"/><text x="10" y="10" font-size="5.5" font-family="Liberation Sans" font-weight="bold" fill="#3a3000" text-anchor="end">JS</text></svg>
<div class="t ft" style="left:534px;top:572.47px">myphone.js</div>
<svg style="left:514.0px;top:592.43px" width="13" height="12" viewBox="0 0 13 12"><path d="M3.5 0.8Q1.8 0.8 1.8 2.5V4.5Q1.8 6 0.6 6Q1.8 6 1.8 7.5V9.5Q1.8 11.2 3.5 11.2M9.5 0.8Q11.2 0.8 11.2 2.5V4.5Q11.2 6 12.4 6Q11.2 6 11.2 7.5V9.5Q11.2 11.2 9.5 11.2" fill="none" stroke="#d9b24c" stroke-width="1.2"/><rect x="4.6" y="8.6" width="1.3" height="1.3" fill="#d9b24c"/><rect x="7.1" y="8.6" width="1.3" height="1.3" fill="#d9b24c"/></svg>
<div class="t ft" style="left:534px;top:592.93px">myphone.json</div>
<svg style="left:515px;top:612.39px" width="10" height="13" viewBox="0 0 10 13"><path d="M0 1A1 1 0 0 1 1 0H7L10 3V12A1 1 0 0 1 9 13H1A1 1 0 0 1 0 12Z" fill="#7cc142"/><path d="M4 5L2.5 7.5L4 10M6 5L7.5 7.5L6 10" fill="none" stroke="#e6f5d5" stroke-width="1"/></svg>
<div class="t ft" style="left:534px;top:613.39px">myphone.wxml</div>
<svg style="left:514px;top:633.85px" width="11" height="11" viewBox="0 0 11 11"><path d="M1 1H10L9 10L5.5 11L2 10Z" fill="none"/><path d="M1.5 1.5H9.5M2 4.5H9M3 7.5H8.5L8 9.5L5.5 10.5L2.5 9.5" fill="none" stroke="#3c8ad8" stroke-width="1.6"/></svg>
<div class="t ft" style="left:534px;top:633.85px">myphone.wxss</div>
<svg style="left:492.5px;top:657.31px" width="7" height="5"><path d="M0 0H7L3.5 5Z" fill="#c8c8c8"/></svg>
<svg style="left:507px;top:655.31px" width="13" height="10" viewBox="0 0 13 10"><path d="M0 1A1 1 0 0 1 1 0H4.5L6 1.5H11A1 1 0 0 1 12 2.5V3H3L0 10Z" fill="#9aa8b0"/><path d="M2.5 4H13L10.5 10H0Z" fill="#b4c0c6"/></svg>
<div class="t ft" style="left:526px;top:654.31px">navigator</div>
<svg style="left:501px;top:676.77px" width="5" height="7"><path d="M0 0V7L5 3.5Z" fill="#c8c8c8"/></svg>
<svg style="left:514px;top:675.77px" width="13" height="10" viewBox="0 0 13 10"><path d="M0 1A1 1 0 0 1 1 0H4.5L6 1.5H12A1 1 0 0 1 13 2.5V9A1 1 0 0 1 12 10H1A1 1 0 0 1 0 9Z" fill="#aab6bc"/></svg>
<div class="t ft" style="left:534px;top:674.77px">@babel</div>
<svg style="left:501px;top:697.23px" width="5" height="7"><path d="M0 0V7L5 3.5Z" fill="#c8c8c8"/></svg>
<svg style="left:514px;top:696.23px" width="13" height="10" viewBox="0 0 13 10"><path d="M0 1A1 1 0 0 1 1 0H4.5L6 1.5H12A1 1 0 0 1 13 2.5V9A1 1 0 0 1 12 10H1A1 1 0 0 1 0 9Z" fill="#aab6bc"/></svg>
<div class="t ft" style="left:534px;top:695.23px">admin</div>
<svg style="left:499.5px;top:718.69px" width="7" height="5"><path d="M0 0H7L3.5 5Z" fill="#c8c8c8"/></svg>
<svg style="left:514px;top:716.69px" width="13" height="10" viewBox="0 0 13 10"><path d="M0 1A1 1 0 0 1 1 0H4.5L6 1.5H11A1 1 0 0 1 12 2.5V3H3L0 10Z" fill="#9aa8b0"/><path d="M2.5 4H13L10.5 10H0Z" fill="#b4c0c6"/></svg>
<div class="t ft" style="left:534px;top:715.69px">combine</div>
<div class="a" style="left:469px;top:166px;width:183px;height:21px;background:#333333"></div>
<svg style="left:474px;top:92px" width="14" height="15" viewBox="0 0 14 15"><path d="M5 0.8H10L13.2 4V11.2H5Z" fill="none" stroke="#e8e8e8" stroke-width="1.4"/><path d="M5 3.8H0.8V14.2H9V11.2" fill="none" stroke="#e8e8e8" stroke-width="1.4"/></svg>
<svg style="left:504px;top:92px" width="15" height="15" viewBox="0 0 15 15"><circle cx="9" cy="6" r="4.8" fill="none" stroke="#8c8c8c" stroke-width="1.4"/><path d="M5.5 9.5L1 14" stroke="#8c8c8c" stroke-width="1.6"/></svg>
<svg style="left:535px;top:92px" width="12" height="15" viewBox="0 0 12 15"><circle cx="3" cy="2.5" r="1.8" fill="none" stroke="#8c8c8c" stroke-width="1.2"/><circle cx="3" cy="12.5" r="1.8" fill="none" stroke="#8c8c8c" stroke-width="1.2"/><circle cx="9.5" cy="6.5" r="1.8" fill="none" stroke="#8c8c8c" stroke-width="1.2"/><path d="M3 4.3V10.7M3 10Q3 7 7.8 6.8" fill="none" stroke="#8c8c8c" stroke-width="1.2"/></svg>
<svg style="left:564px;top:92px" width="15" height="15" viewBox="0 0 15 15"><g fill="none" stroke="#8c8c8c" stroke-width="1.2"><rect x="0.6" y="5.6" width="4.5" height="4.5"/><rect x="5.1" y="5.6" width="4.5" height="4.5"/><rect x="0.6" y="10.1" width="4.5" height="4.5"/><rect x="5.1" y="10.1" width="4.5" height="4.5"/><rect x="9" y="0.6" width="5" height="5"/></g></svg>
<svg style="left:595px;top:93px" width="14" height="14" viewBox="0 0 14 14"><g fill="none" stroke="#8c8c8c" stroke-width="1.2"><rect x="0.6" y="0.6" width="12.8" height="12.8"/><path d="M0.6 4.5H6.5V9.5H13.4M4 13.4V9.5"/></g></svg>
<svg style="left:623px;top:94px" width="16" height="12" viewBox="0 0 16 12"><path d="M1 5H13Q15 4 15.5 2Q16 6 13 9Q10 12 6 11Q2 10 1 5Z" fill="#8c8c8c"/><rect x="4" y="2" width="2.5" height="2.5" fill="#8c8c8c"/><rect x="7" y="2" width="2.5" height="2.5" fill="#8c8c8c"/><rect x="7" y="0" width="2" height="1.8" fill="#8c8c8c"/></svg>
<div class="t" style="left:485px;top:124px;font-size:11px;color:#cfcfcf">资源管理器</div>
<div class="a" style="left:622px;top:129px;width:2px;height:2px;background:#ccc;box-shadow:5px 0 #ccc,10px 0 #ccc"></div>
<svg style="left:473px;top:152px" width="5" height="8"><path d="M0 0V8L5 4Z" fill="#c8c8c8"/></svg>
<div class="t" style="left:485px;top:151.5px;font-size:10px;color:#d0d0d0">打开的编辑器</div>
<svg style="left:472px;top:174px" width="8" height="5"><path d="M0 0H8L4 5Z" fill="#c8c8c8"/></svg>
<div class="t" style="left:485px;top:171.5px;font-size:9.8px;color:#d0d0d0;font-weight:bold">PAGES</div>
<svg style="left:555px;top:170px" width="12" height="12"><path d="M6 0V12M0 6H12" stroke="#c0c0c0" stroke-width="1.3"/></svg>
<svg style="left:580px;top:170px" width="14" height="12" viewBox="0 0 14 12"><path d="M0.7 0.7H5L6.5 2.2H13.3V11.3H0.7Z" fill="none" stroke="#c0c0c0" stroke-width="1.2"/><path d="M7 4.5V9M4.7 6.7H9.3" stroke="#c0c0c0" stroke-width="1.2"/></svg>
<svg style="left:606px;top:170px" width="13" height="13" viewBox="0 0 13 13"><path d="M2 8.5A5 5 0 0 1 10 2.5M11 4.5A5 5 0 0 1 3 10.5" fill="none" stroke="#c0c0c0" stroke-width="1.3"/><path d="M10.5 0.5v3h-3M2.5 12.5v-3h3" fill="none" stroke="#c0c0c0" stroke-width="1.1"/></svg>
<svg style="left:632px;top:170px" width="13" height="12" viewBox="0 0 13 12"><path d="M0 1H13M0 5H10M0 9H6" stroke="#c0c0c0" stroke-width="1.2"/><path d="M9 12L11 8.5L13 12Z" fill="#c0c0c0"/></svg>
<div class="a" style="left:469px;top:735px;width:183px;height:21px;background:#333333"></div>
<svg style="left:472px;top:744px" width="8" height="5"><path d="M0 0H8L4 5Z" fill="#c8c8c8"/></svg>
<div class="t" style="left:485px;top:740px;font-size:11px;color:#d0d0d0">大纲</div>
<svg style="left:481.5px;top:764.00px" width="7" height="5"><path d="M0 0H7L3.5 5Z" fill="#c8c8c8"/></svg>
<svg style="left:496px;top:760.00px" width="12" height="13" viewBox="0 0 12 13"><path d="M6 0.8L11.2 3.6V9.4L6 12.2L0.8 9.4V3.6Z M0.8 3.6L6 6.4L11.2 3.6M6 6.4V12.2" fill="none" stroke="#a77cd9" stroke-width="1.3" stroke-linejoin="round"/></svg>
<div class="t ft" style="left:513px;top:761.00px">alicopy</div>
<svg style="left:489.5px;top:784.46px" width="7" height="5"><path d="M0 0H7L3.5 5Z" fill="#c8c8c8"/></svg>
<svg style="left:504px;top:780.46px" width="12" height="13" viewBox="0 0 12 13"><path d="M6 0.8L11.2 3.6V9.4L6 12.2L0.8 9.4V3.6Z M0.8 3.6L6 6.4L11.2 3.6M6 6.4V12.2" fill="none" stroke="#a77cd9" stroke-width="1.3" stroke-linejoin="round"/></svg>
<div class="t ft" style="left:521px;top:781.46px">success</div>
<svg style="left:510px;top:800.92px" width="14" height="13" viewBox="0 0 14 13"><path d="M1.5 11.5L7 6A3.5 3.5 0 0 1 11 1.2L9 3.5L10.5 5L12.8 3A3.5 3.5 0 0 1 8 7L2.5 12.5Z" fill="none" stroke="#c0c0c0" stroke-width="1.1" stroke-linejoin="round"/></svg>
<div class="t ft" style="left:528px;top:801.92px">duration</div>
<svg style="left:510px;top:821.38px" width="14" height="13" viewBox="0 0 14 13"><path d="M1.5 11.5L7 6A3.5 3.5 0 0 1 11 1.2L9 3.5L10.5 5L12.8 3A3.5 3.5 0 0 1 8 7L2.5 12.5Z" fill="none" stroke="#c0c0c0" stroke-width="1.1" stroke-linejoin="round"/></svg>
<div class="t ft" style="left:528px;top:822.38px">icon</div>
<svg style="left:510px;top:841.84px" width="14" height="13" viewBox="0 0 14 13"><path d="M1.5 11.5L7 6A3.5 3.5 0 0 1 11 1.2L9 3.5L10.5 5L12.8 3A3.5 3.5 0 0 1 8 7L2.5 12.5Z" fill="none" stroke="#c0c0c0" stroke-width="1.1" stroke-linejoin="round"/></svg>
<div class="t ft" style="left:528px;top:842.84px">title</div>
<!-- outline extra -->
<svg style="left:510px;top:862.30px" width="14" height="13" viewBox="0 0 14 13"><path d="M1.5 11.5L7 6A3.5 3.5 0 0 1 11 1.2L9 3.5L10.5 5L12.8 3A3.5 3.5 0 0 1 8 7L2.5 12.5Z" fill="none" stroke="#c0c0c0" stroke-width="1.1" stroke-linejoin="round"/></svg>
<!-- explorer scrollbar -->
<div class="a" style="left:643px;top:231px;width:9px;height:54px;background:#474747"></div>
<!-- editor -->
<div class="a" style="left:652px;top:85px;width:626px;height:28px;background:#333333"></div>
<div class="a" style="left:652px;top:113px;width:626px;height:551px;background:#2d2d2d"></div>
<div class="a" style="left:787px;top:85px;width:1px;height:28px;background:#252525"></div>
<div class="a" style="left:899px;top:85px;width:1px;height:28px;background:#252525"></div>
<div class="a" style="left:1017px;top:85px;width:1px;height:28px;background:#252525"></div>
<div class="a" style="left:1018px;top:85px;width:160px;height:28px;background:#2d2d2d"></div>
<div class="t tb" style="left:654px;top:94px">index.wxml <span style="font-size:10.5px;color:#8a8a8a">&nbsp;...\album</span></div>
<svg style="left:800px;top:94.5px" width="11" height="11" viewBox="0 0 11 11"><rect width="11" height="11" fill="#f1c40f"/><text x="10" y="10" font-size="5.5" font-family="Liberation Sans" font-weight="bold" fill="#3a3000" text-anchor="end">JS</text></svg>
<div class="t tb" style="left:818px;top:94px">figure.js</div>
<svg style="left:912px;top:93.5px" width="10" height="13" viewBox="0 0 10 13"><path d="M0 1A1 1 0 0 1 1 0H7L10 3V12A1 1 0 0 1 9 13H1A1 1 0 0 1 0 12Z" fill="#7cc142"/><path d="M4 5L2.5 7.5L4 10M6 5L7.5 7.5L6 10" fill="none" stroke="#e6f5d5" stroke-width="1"/></svg>
<div class="t tb" style="left:930px;top:94px">figure.wxml</div>
<svg style="left:1030px;top:94.5px" width="11" height="11" viewBox="0 0 11 11"><rect width="11" height="11" fill="#f1c40f"/><text x="10" y="10" font-size="5.5" font-family="Liberation Sans" font-weight="bold" fill="#3a3000" text-anchor="end">JS</text></svg>
<div class="t tb" style="left:1048px;top:94px;color:#f0f0f0">index.js <span style="font-size:10.5px;color:#a8a8a8">&nbsp;pages\index</span></div>
<svg style="left:1158px;top:95px" width="10" height="10"><path d="M0.5 0.5L9.5 9.5M9.5 0.5L0.5 9.5" stroke="#e8e8e8" stroke-width="1.4"/></svg>
<svg style="left:1189px;top:94.5px" width="12" height="12" viewBox="0 0 11 11"><rect width="11" height="11" fill="#f1c40f"/><text x="10" y="10" font-size="5.5" font-family="Liberation Sans" font-weight="bold" fill="#3a3000" text-anchor="end">JS</text></svg>
<svg style="left:1219px;top:93px" width="13" height="13"><rect x="0.7" y="0.7" width="11.6" height="11.6" fill="none" stroke="#cfcfcf" stroke-width="1.3"/><path d="M6.5 0.7V12.3" stroke="#cfcfcf" stroke-width="1.3"/></svg>
<div class="a" style="left:1249px;top:99px;width:2.2px;height:2.2px;border-radius:50%;background:#ddd;box-shadow:5px 0 #ddd,10px 0 #ddd"></div>
<svg style="left:660px;top:119px" width="14" height="11"><path d="M0 1H14M0 4H14M0 7H14M0 10H14" stroke="#9a9a9a" stroke-width="1"/></svg>
<svg style="left:690px;top:117.5px" width="11" height="14"><path d="M0.7 0.7H10.3V13L5.5 9L0.7 13Z" fill="none" stroke="#9a9a9a" stroke-width="1.3"/></svg>
<svg style="left:716px;top:119px" width="13" height="11"><path d="M13 5.5H1.5M6 1L1.5 5.5L6 10" fill="none" stroke="#9a9a9a" stroke-width="1.3"/></svg>
<svg style="left:743px;top:119px" width="13" height="11"><path d="M0 5.5H11.5M7 1L11.5 5.5L7 10" fill="none" stroke="#9a9a9a" stroke-width="1.3"/></svg>
<div class="t bc" style="left:770px;top:118.5px">pages</div>
<svg class="chev" style="left:807px;top:120px" width="5" height="9"><path d="M0.5 0.5L4.5 4.5L0.5 8.5" fill="none" stroke="#9a9a9a" stroke-width="1.1"/></svg>
<div class="t bc" style="left:817px;top:118.5px">index</div>
<svg style="left:851px;top:120px" width="5" height="9"><path d="M0.5 0.5L4.5 4.5L0.5 8.5" fill="none" stroke="#9a9a9a" stroke-width="1.1"/></svg>
<svg style="left:862.5px;top:119.5px" width="11" height="11" viewBox="0 0 11 11"><rect width="11" height="11" fill="#f1c40f"/><text x="10" y="10" font-size="5.5" font-family="Liberation Sans" font-weight="bold" fill="#3a3000" text-anchor="end">JS</text></svg>
<div class="t bc" style="left:882px;top:118.5px;color:#c8c8c8">index.js</div>
<svg style="left:926px;top:120px" width="5" height="9"><path d="M0.5 0.5L4.5 4.5L0.5 8.5" fill="none" stroke="#9a9a9a" stroke-width="1.1"/></svg>
<svg style="left:937px;top:118.5px" width="12" height="13" viewBox="0 0 12 13"><path d="M6 0.8L11.2 3.6V9.4L6 12.2L0.8 9.4V3.6Z M0.8 3.6L6 6.4L11.2 3.6M6 6.4V12.2" fill="none" stroke="#9b72cf" stroke-width="1.2" stroke-linejoin="round"/></svg>
<div class="t bc" style="left:956px;top:118.5px">alicopy</div>
<svg style="left:999px;top:120px" width="5" height="9"><path d="M0.5 0.5L4.5 4.5L0.5 8.5" fill="none" stroke="#9a9a9a" stroke-width="1.1"/></svg>
<svg style="left:1009px;top:118px" width="14" height="13" viewBox="0 0 14 13"><path d="M1.5 11.5L7 6A3.5 3.5 0 0 1 11 1.2L9 3.5L10.5 5L12.8 3A3.5 3.5 0 0 1 8 7L2.5 12.5Z" fill="none" stroke="#a0a0a0" stroke-width="1.1" stroke-linejoin="round"/></svg>
<div class="t bc" style="left:1029px;top:118.5px">content</div>
<div class="a" style="left:652px;top:134px;width:626px;height:2px;background:linear-gradient(#202020,#282828)"></div>
<div class="a" style="left:652px;top:136px;width:626px;height:528px;overflow:hidden">
<div class="a" style="left:67px;top:0;width:1px;height:528px;background:#3a3a3a"></div>
<div class="a" style="left:79px;top:-14.98px;width:1px;height:22.32px;background:#3a3a3a"></div>
<div class="t ln" style="left:0;width:42px;top:-9.82px">136</div>
<div class="t code" style="left:90.30px;top:-10.32px"><span style="color:#d4d4d4">wx</span><span style="color:#9a9a9a">.</span><span style="color:#f0a35e">navigateTo</span><span style="color:#ffd700">(</span><span style="color:#c586c0">{</span></div>
<div class="a" style="left:79px;top:7.34px;width:1px;height:22.32px;background:#3a3a3a"></div>
<div class="a" style="left:91px;top:7.34px;width:1px;height:22.32px;background:#3a3a3a"></div>
<div class="t ln" style="left:0;width:42px;top:12.50px">137</div>
<div class="t code" style="left:102.60px;top:12.00px"><span style="color:#d4d4d4">url: </span><span style="color:#b8c8d8">'</span><span style="color:#f07a64">../../pagesB/pages/clock/clock</span><span style="color:#b8c8d8">'</span></div>
<div class="a" style="left:79px;top:29.66px;width:1px;height:22.32px;background:#3a3a3a"></div>
<div class="t ln" style="left:0;width:42px;top:34.82px">138</div>
<div class="t code" style="left:90.30px;top:34.32px"><span style="color:#c586c0">}</span><span style="color:#ffd700">)</span></div>
<div class="a" style="left:79px;top:51.98px;width:1px;height:22.32px;background:#3a3a3a"></div>
<div class="t ln" style="left:0;width:42px;top:57.14px">139</div>
<div class="t ln" style="left:0;width:42px;top:79.45px">140</div>
<div class="t code" style="left:78.00px;top:78.95px"><span style="color:#79b8e6">}</span><span style="color:#9a9a9a">,</span></div>
<div class="t ln" style="left:0;width:42px;top:101.77px">141</div>
<svg style="left:49px;top:100.77px" width="10" height="6"><path d="M0.5 0.5L5 5L9.5 0.5" fill="none" stroke="#b0b0b0" stroke-width="1.2"/></svg>
<div class="t code" style="left:78.00px;top:101.27px"><span style="color:#f0a35e">fanyi</span><span style="color:#d4d4d4">:</span><span style="color:#e6cc62">function</span><span style="color:#79b8e6">(){</span></div>
<div class="a" style="left:79px;top:118.93px;width:1px;height:22.32px;background:#3a3a3a"></div>
<div class="t ln" style="left:0;width:42px;top:124.09px">142</div>
<svg style="left:49px;top:123.09px" width="10" height="6"><path d="M0.5 0.5L5 5L9.5 0.5" fill="none" stroke="#b0b0b0" stroke-width="1.2"/></svg>
<div class="t code" style="left:90.30px;top:123.59px"><span style="color:#d4d4d4">wx</span><span style="color:#9a9a9a">.</span><span style="color:#f0a35e">navigateTo</span><span style="color:#ffd700">(</span><span style="color:#c586c0">{</span></div>
<div class="a" style="left:79px;top:141.25px;width:1px;height:22.32px;background:#3a3a3a"></div>
<div class="a" style="left:91px;top:141.25px;width:1px;height:22.32px;background:#3a3a3a"></div>
<div class="t ln" style="left:0;width:42px;top:146.41px">143</div>
<div class="t code" style="left:102.60px;top:145.91px"><span style="color:#d4d4d4">url: </span><span style="color:#b8c8d8">'</span><span style="color:#f07a64">../../pagesC/pages/index/index</span><span style="color:#b8c8d8">'</span></div>
<div class="a" style="left:79px;top:163.57px;width:1px;height:22.32px;background:#3a3a3a"></div>
<div class="t ln" style="left:0;width:42px;top:168.73px">144</div>
<div class="t code" style="left:90.30px;top:168.23px"><span style="color:#c586c0">}</span><span style="color:#ffd700">)</span></div>
<div class="a" style="left:79px;top:185.88px;width:1px;height:22.32px;background:#3a3a3a"></div>
<div class="t ln" style="left:0;width:42px;top:191.04px">145</div>
<div class="t ln" style="left:0;width:42px;top:213.36px">146</div>
<div class="t code" style="left:78.00px;top:212.86px"><span style="color:#79b8e6">}</span><span style="color:#9a9a9a">,</span></div>
<div class="t ln" style="left:0;width:42px;top:235.68px">147</div>
<svg style="left:49px;top:234.68px" width="10" height="6"><path d="M0.5 0.5L5 5L9.5 0.5" fill="none" stroke="#b0b0b0" stroke-width="1.2"/></svg>
<div class="t code" style="left:78.00px;top:235.18px"><span style="color:#f0a35e">b4</span><span style="color:#d4d4d4">:</span><span style="color:#e6cc62">function</span><span style="color:#79b8e6">(){</span></div>
<div class="a" style="left:79px;top:252.84px;width:1px;height:22.32px;background:#3a3a3a"></div>
<div class="t ln" style="left:0;width:42px;top:258.00px">148</div>
<svg style="left:49px;top:257.00px" width="10" height="6"><path d="M0.5 0.5L5 5L9.5 0.5" fill="none" stroke="#b0b0b0" stroke-width="1.2"/></svg>
<div class="t code" style="left:90.30px;top:257.50px"><span style="color:#d4d4d4">wx</span><span style="color:#9a9a9a">.</span><span style="color:#f0a35e">navigateTo</span><span style="color:#ffd700">(</span><span style="color:#c586c0">{</span></div>
<div class="a" style="left:79px;top:275.16px;width:1px;height:22.32px;background:#3a3a3a"></div>
<div class="a" style="left:91px;top:275.16px;width:1px;height:22.32px;background:#3a3a3a"></div>
<div class="t ln" style="left:0;width:42px;top:280.32px">149</div>
<div class="t code" style="left:102.60px;top:279.82px"><span style="color:#d4d4d4">url: </span><span style="color:#b8c8d8">'</span><span style="color:#f07a64">../../taskOuter/pages/util/share/share</span><span style="color:#b8c8d8">'</span></div>
<div class="a" style="left:79px;top:297.48px;width:1px;height:22.32px;background:#3a3a3a"></div>
<div class="t ln" style="left:0;width:42px;top:302.63px">150</div>
<div class="t code" style="left:90.30px;top:302.13px"><span style="color:#c586c0">}</span><span style="color:#ffd700">)</span></div>
<div class="a" style="left:79px;top:319.79px;width:1px;height:22.32px;background:#3a3a3a"></div>
<div class="t ln" style="left:0;width:42px;top:324.95px">151</div>
<div class="t ln" style="left:0;width:42px;top:347.27px">152</div>
<div class="t code" style="left:78.00px;top:346.77px"><span style="color:#79b8e6">}</span><span style="color:#9a9a9a">,</span></div>
<div class="t ln" style="left:0;width:42px;top:369.59px">153</div>
<svg style="left:49px;top:368.59px" width="10" height="6"><path d="M0.5 0.5L5 5L9.5 0.5" fill="none" stroke="#b0b0b0" stroke-width="1.2"/></svg>
<div class="t code" style="left:78.00px;top:369.09px"><span style="color:#f0a35e">b2</span><span style="color:#d4d4d4">:</span><span style="color:#e6cc62">function</span><span style="color:#79b8e6">(){</span></div>
<div class="a" style="left:79px;top:386.75px;width:1px;height:22.32px;background:#3a3a3a"></div>
<div class="t ln" style="left:0;width:42px;top:391.91px">154</div>
<svg style="left:49px;top:390.91px" width="10" height="6"><path d="M0.5 0.5L5 5L9.5 0.5" fill="none" stroke="#b0b0b0" stroke-width="1.2"/></svg>
<div class="t code" style="left:90.30px;top:391.41px"><span style="color:#d4d4d4">wx</span><span style="color:#9a9a9a">.</span><span style="color:#f0a35e">navigateTo</span><span style="color:#ffd700">(</span><span style="color:#c586c0">{</span></div>
<div class="a" style="left:79px;top:409.07px;width:1px;height:22.32px;background:#3a3a3a"></div>
<div class="a" style="left:91px;top:409.07px;width:1px;height:22.32px;background:#3a3a3a"></div>
<div class="t ln" style="left:0;width:42px;top:414.22px">155</div>
<div class="t code" style="left:102.60px;top:413.72px"><span style="color:#d4d4d4">url: </span><span style="color:#b8c8d8">'</span><span style="color:#f07a64">../../taskOuter/pages/util/material/poster</span><span style="color:#b8c8d8">'</span></div>
<div class="a" style="left:79px;top:431.38px;width:1px;height:22.32px;background:#3a3a3a"></div>
<div class="t ln" style="left:0;width:42px;top:436.54px">156</div>
<div class="t code" style="left:90.30px;top:436.04px"><span style="color:#c586c0">}</span><span style="color:#ffd700">)</span></div>
<div class="a" style="left:79px;top:453.70px;width:1px;height:22.32px;background:#3a3a3a"></div>
<div class="t ln" style="left:0;width:42px;top:458.86px">157</div>
<div class="t ln" style="left:0;width:42px;top:481.18px">158</div>
<div class="t code" style="left:78.00px;top:480.68px"><span style="color:#79b8e6">}</span><span style="color:#9a9a9a">,</span></div>
<div class="t ln" style="left:0;width:42px;top:503.50px">159</div>
<svg style="left:49px;top:502.50px" width="10" height="6"><path d="M0.5 0.5L5 5L9.5 0.5" fill="none" stroke="#b0b0b0" stroke-width="1.2"/></svg>
<div class="t code" style="left:78.00px;top:503.00px"><span style="color:#f0a35e">b3</span><span style="color:#d4d4d4">:</span><span style="color:#e6cc62">function</span><span style="color:#79b8e6">(){</span></div>
<div class="a" style="left:79px;top:520.66px;width:1px;height:22.32px;background:#3a3a3a"></div>
<div class="t ln" style="left:0;width:42px;top:525.81px">160</div>
<svg style="left:49px;top:524.81px" width="10" height="6"><path d="M0.5 0.5L5 5L9.5 0.5" fill="none" stroke="#b0b0b0" stroke-width="1.2"/></svg>
<div class="t code" style="left:90.30px;top:525.31px"><span style="color:#d4d4d4">wx</span><span style="color:#9a9a9a">.</span><span style="color:#f0a35e">navigateTo</span><span style="color:#ffd700">(</span><span style="color:#c586c0">{</span></div>
</div>
<div class="a" style="left:1265px;top:136px;width:1px;height:528px;background:#3c3c3c"></div>
<div class="a" style="left:1266px;top:136px;width:12px;height:528px;background:#2c2c2c"></div>
<div class="a" style="left:1268px;top:295px;width:10px;height:2px;background:#aaa"></div>
<div class="a" style="left:1271px;top:294px;width:3px;height:4px;background:#aaa"></div>

<!-- editor left line -->
<div class="a" style="left:652px;top:113px;width:1px;height:551px;background:#262626"></div>
<!-- debugger -->
<div class="a" style="left:652px;top:664px;width:626px;height:199px;background:#212121"></div>
<div class="a" style="left:652px;top:664px;width:626px;height:29px;background:#313131;border-top:2px solid #3d3d3d"></div>
<div class="t" style="left:672px;top:674.5px;font-size:11px;color:#e8e8e8">调试器</div>
<div class="a" style="left:672px;top:690px;width:31px;height:2px;background:#cfcfcf"></div>
<div class="a" style="left:710px;top:672px;width:17px;height:17px;border-radius:50%;background:#4a4a4a"></div>
<div class="t" style="left:715.5px;top:675px;font-size:11px;color:#d8d8d8">4</div>
<div class="t" style="left:745px;top:674.5px;font-size:11px;color:#9c9c9c">问题</div>
<div class="t" style="left:784px;top:674.5px;font-size:11px;color:#9c9c9c">输出</div>
<div class="t" style="left:823px;top:674.5px;font-size:11px;color:#9c9c9c">终端</div>
<div class="t" style="left:862px;top:674.5px;font-size:11px;color:#9c9c9c">代码质量</div>
<svg style="left:1220px;top:678.5px" width="10" height="5.5"><path d="M0.5 5L5 0.8L9.5 5" fill="none" stroke="#cfcfcf" stroke-width="1.3"/></svg>
<svg style="left:1250px;top:677px" width="9" height="9"><path d="M0.5 0.5L8.5 8.5M8.5 0.5L0.5 8.5" stroke="#dcdcdc" stroke-width="1.3"/></svg>
<div class="a" style="left:652px;top:693px;width:626px;height:24px;background:#282828"></div>
<svg style="left:661px;top:698px" width="15" height="14" viewBox="0 0 15 14"><path d="M5 12.5H0.7V0.7H12.5V5" fill="none" stroke="#9a9a9a" stroke-width="1.2"/><path d="M6 6L14 9L10.5 10.5L9 14Z" fill="#9a9a9a"/></svg>
<div class="a" style="left:685px;top:697px;width:1px;height:16px;background:#3c3c3c"></div>
<div class="a" style="left:691px;top:693px;width:50px;height:24px;background:#0c0c0c"></div>
<div class="t dt" style="left:702px;top:699.5px;color:#e8e8e8">Wxml</div>
<div class="t dt" style="left:752px;top:699.5px;color:#c8c8c8">Console</div>
<div class="t dt" style="left:813.5px;top:699.5px;color:#c8c8c8">Sources</div>
<div class="t dt" style="left:874px;top:699.5px;color:#c8c8c8">Network</div>
<div class="t dt" style="left:938px;top:699.5px;color:#c8c8c8">Performance</div>
<div class="t dt" style="left:1022px;top:699.5px;color:#c8c8c8">Memory</div>
<svg style="left:1082px;top:700px" width="11" height="9"><path d="M0.8 0.8L4.5 4.5L0.8 8.2M5.8 0.8L9.5 4.5L5.8 8.2" fill="none" stroke="#a8a8a8" stroke-width="1.3"/></svg>
<svg style="left:1166px;top:699px" width="11" height="10"><path d="M5.5 0.5L10.8 9.6H0.2Z" fill="#f4c21b"/><path d="M5.5 3.5V6.5M5.5 7.5V8.5" stroke="#3a3000" stroke-width="1"/></svg>
<div class="t" style="left:1178px;top:699px;font-size:11.5px;color:#dcdcdc">4</div>
<div class="a" style="left:1194px;top:697px;width:1px;height:16px;background:#3c3c3c"></div>
<svg style="left:1205px;top:698px" width="14" height="14" viewBox="0 0 14 14"><path d="M7 0.5L8.3 2.3L10.5 1.7L10.9 3.9L13 4.6L12.2 6.7L13.5 8.5L11.6 9.6L11.6 11.8L9.4 11.8L8.3 13.7L6.5 12.6L4.5 13.5L3.6 11.5L1.5 11L2 8.8L0.5 7.2L2.2 5.8L1.8 3.6L4 3.2L5 1.2Z" fill="#9e9e9e"/><circle cx="7" cy="7" r="2.4" fill="#292929"/></svg>
<div class="a" style="left:1237px;top:698px;width:3px;height:3px;border-radius:50%;background:#aaa;box-shadow:0 5px #aaa,0 10px #aaa"></div>
<svg style="left:1256px;top:698px" width="17" height="14" viewBox="0 0 17 14"><rect x="5" y="0.7" width="11.3" height="9" fill="none" stroke="#8a8a8a" stroke-width="1.4"/><path d="M0.7 4V13.3H12V10" fill="none" stroke="#8a8a8a" stroke-width="1.4"/><rect x="7" y="3" width="7" height="4" fill="#8a8a8a"/></svg>
<div class="a" style="left:652px;top:717px;width:626px;height:5px;background:#262626"></div>
<div class="a" style="left:652px;top:722px;width:626px;height:1px;background:#3a3a3a"></div>
<div class="a" style="left:1265px;top:717px;width:13px;height:5px;background:#4a4a4a"></div>
<div class="a" style="left:652px;top:744px;width:626px;height:1px;background:#3a3a3a"></div>
<div class="a" style="left:652px;top:745px;width:626px;height:24px;background:#292929"></div>
<div class="a" style="left:653px;top:745px;width:47px;height:24px;background:#0c0c0c"></div>
<div class="t dt" style="left:662px;top:751.5px;color:#e8e8e8">Styles</div>
<div class="t dt" style="left:708.5px;top:751.5px;color:#c8c8c8">Computed</div>
<div class="t dt" style="left:779.5px;top:751.5px;color:#c8c8c8">Dataset</div>
<div class="t dt" style="left:835px;top:751.5px;color:#c8c8c8">Component Data</div>
<div class="t dt" style="left:937px;top:751.5px;color:#c8c8c8">Scope Data</div>
<div class="a" style="left:652px;top:769px;width:626px;height:1px;background:#333"></div>
<div class="a" style="left:652px;top:770px;width:563px;height:24px;background:#1e1e1e"></div>
<div class="t" style="left:660px;top:776.5px;font-size:11px;color:#8a8a8a">Filter</div>
<div class="a" style="left:1215px;top:770px;width:63px;height:24px;background:#252525"></div><div class="t" style="left:1222px;top:774.5px;font-size:14px;letter-spacing:1px;font-family:'Liberation Serif',serif;color:#e8e8e8;font-weight:bold">.cls</div>
<svg style="left:1258px;top:776px" width="11" height="11"><path d="M5 0V10M0 5H10" stroke="#6a6a6a" stroke-width="1.3"/><path d="M9 11L11 9V11Z" fill="#6a6a6a"/></svg>

<div class="a" style="left:1px;top:863px;width:1277px;height:25px;background:#353535;border-radius:0 0 6px 6px"></div>
<div class="a" style="left:466.5px;top:863px;width:1.5px;height:25px;background:#242424"></div>
<div class="t sb" style="left:7px;top:870.5px">页面路径</div><svg style="left:56px;top:875px" width="6" height="4"><path d="M0 0H6L3 4Z" fill="#a8a8a8"/></svg>
<div class="a" style="left:69px;top:869px;width:1px;height:12px;background:#555"></div>
<div class="t sb" style="left:77px;top:870.5px">pages/index/index</div>
<svg style="left:175px;top:869px" width="12" height="12"><rect x="3" y="3" width="8.3" height="8.3" fill="none" stroke="#a8a8a8" stroke-width="1.2"/><path d="M0.7 9V0.7H9" fill="none" stroke="#a8a8a8" stroke-width="1.2"/></svg>
<svg style="left:382px;top:869.5px" width="15" height="14" viewBox="0 0 15 14"><ellipse cx="7.5" cy="8" rx="4" ry="4.8" fill="none" stroke="#a0a0a0" stroke-width="1.2"/><path d="M5 3.5A2.5 2 0 0 1 10 3.5M7.5 3.8V12.8M0.5 8H3.5M11.5 8H14.5M1.5 3.5L4 5.5M13.5 3.5L11 5.5M1.5 12.5L4 10.5M13.5 12.5L11 10.5" fill="none" stroke="#a0a0a0" stroke-width="1.1"/></svg>
<svg style="left:412px;top:871.5px" width="16" height="10" viewBox="0 0 16 10"><path d="M0.7 5Q8 -3 15.3 5Q8 13 0.7 5Z" fill="none" stroke="#a8a8a8" stroke-width="1.2"/><circle cx="8" cy="5" r="2.2" fill="none" stroke="#a8a8a8" stroke-width="1.2"/></svg>
<div class="a" style="left:446px;top:875.5px;width:2px;height:2px;background:#aaa;box-shadow:4px 0 #aaa,8px 0 #aaa"></div>
<svg style="left:481px;top:870.5px" width="12" height="12"><circle cx="6" cy="6" r="5.3" fill="none" stroke="#9a9a9a" stroke-width="1.1"/><path d="M3.8 3.8L8.2 8.2M8.2 3.8L3.8 8.2" stroke="#9a9a9a" stroke-width="1.1"/></svg>
<div class="t sb" style="left:495px;top:870.5px">0</div>
<svg style="left:507px;top:870px" width="13" height="12"><path d="M6.5 0.8L12.3 11.3H0.7Z" fill="none" stroke="#9a9a9a" stroke-width="1.1"/><path d="M6.5 4.5V8M6.5 9V10" stroke="#9a9a9a" stroke-width="1.1"/></svg>
<div class="t sb" style="left:521px;top:870.5px">0</div>
<div class="t sb" style="left:1019px;top:870.5px">行 120，列 23</div>
<div class="t sb" style="left:1104px;top:870.5px">空格: 2</div>
<div class="t sb" style="left:1152px;top:870.5px">UTF-8</div>
<div class="t sb" style="left:1198px;top:870.5px">LF</div>
<div class="t sb" style="left:1222px;top:870.5px">JavaScript</div>
</body></html>
